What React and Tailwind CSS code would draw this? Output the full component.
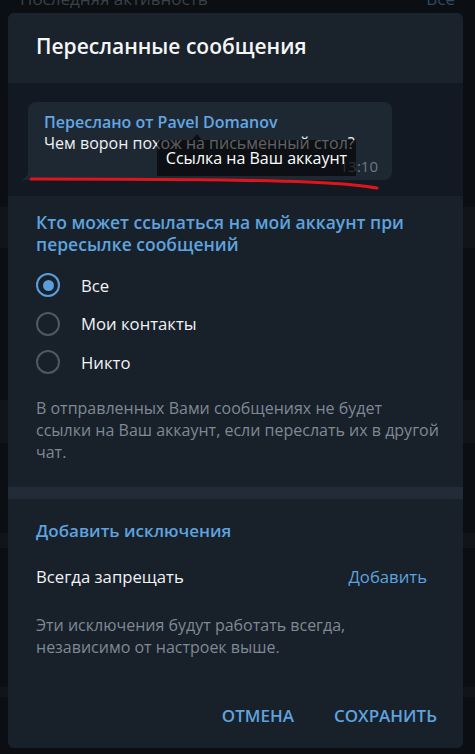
import React, { useState } from "react";

const options = ["Все", "Мои контакты", "Никто"];

const Radio = ({ checked, label, onClick }) => (
  <button
    type="button"
    onClick={onClick}
    className="flex items-center h-[38.5px] w-full text-left"
  >
    <span
      className={
        checked
          ? "w-[24px] h-[24px] rounded-full border-[2px] border-[#5a9fdc] flex items-center justify-center"
          : "w-[24px] h-[24px] rounded-full border-[2px] border-[#4f5863]"
      }
    >
      {checked && <span className="w-[11px] h-[11px] rounded-full bg-[#5a9fdc]" />}
    </span>
    <span className="ml-[21px] text-[16.7px] text-[#f1f3f5]">{label}</span>
  </button>
);

const App = () => {
  const [who, setWho] = useState(0);

  return (
    <div className="relative h-[754px] overflow-hidden bg-[#0b0f13] font-['Open_Sans',sans-serif]">
      {/* dimmed page under the box */}
      <div className="flex flex-col">
        <div className="flex justify-between px-[20px] -mt-[14px] h-[20px] text-[17px] text-[#3a4148]">
          <span>Последняя активность</span>
          <span className="text-[#2c4a66]">Все</span>
        </div>
        <div className="h-[201px]" />
        <div className="h-[41px] bg-[#111519]" />
        <div className="h-[152px]" />
        <div className="h-[43px] bg-[#111519]" />
        <div className="h-[90px]" />
        <div className="h-[15px] bg-[#111519]" />
        <div className="h-[139px]" />
        <div className="h-[10px] bg-[#111519]" />
      </div>

      {/* box */}
      <div className="absolute left-[8px] top-[13px] w-[455px] h-[735px] rounded-[6px] overflow-hidden bg-[#18202a] flex flex-col">
        <div className="h-[70px] shrink-0 bg-[#1a222c] flex items-center px-[28px]">
          <h2 className="text-[21px] font-semibold text-[#f4f6f8] -mt-[2px]">
            Пересланные сообщения
          </h2>
        </div>

        <div className="relative h-[113px] shrink-0 bg-[#121922] pt-[19px] pl-[20px]">
          <div className="relative w-[364px] h-[78px] rounded-[8px] bg-[#1e2833] px-[16px] pt-[10px]">
            <div className="text-[16px] font-semibold text-[#63a7e3] leading-[21px]">
              Переслано от Pavel Domanov
            </div>
            <div className="text-[16px] text-[#eef1f4] leading-[21px]">
              Чем ворон похож на письменный стол?
            </div>
            <div className="absolute right-[14px] bottom-[3px] text-[15px] text-[#6c7987]">
              13:10
            </div>
            <svg className="absolute -left-[7px] bottom-0" width="8" height="10" viewBox="0 0 8 10">
              <path d="M8 0 V10 H0 C4 9 7 6 8 0 Z" fill="#1e2833" />
            </svg>
            {/* tooltip */}
            <div className="absolute left-[129px] top-[38px] w-[199px] h-[36px] bg-black/60 flex items-center justify-center text-[16px] text-white">
              Ссылка на Ваш аккаунт
            </div>
            <svg className="absolute left-[164px] top-[31px]" width="10" height="7" viewBox="0 0 10 7">
              <path d="M0 7 L5 1 L10 7 Z" fill="#000" fillOpacity="0.6" />
            </svg>
          </div>
          <svg className="absolute left-0 top-0" width="455" height="113" viewBox="0 0 455 113">
            <path
              d="M23 96 C 140 96, 250 97, 300 99 S 360 104, 369 105"
              stroke="#e0141c"
              strokeWidth="3.2"
              fill="none"
              strokeLinecap="round"
            />
          </svg>
        </div>

        <div className="px-[28px] pt-[15px]">
          <div className="text-[17.5px] font-semibold text-[#5ea3df] leading-[22px]">
            Кто может ссылаться на мой аккаунт при пересылке сообщений
          </div>
          <div className="mt-[11px]">
            {options.map((o, i) => (
              <Radio key={o} label={o} checked={who === i} onClick={() => setWho(i)} />
            ))}
          </div>
          <p className="mt-[15px] -mr-[14px] text-[16px] leading-[22px] text-[#7f8994]">
            В отправленных Вами сообщениях не будет
            <br />
            ссылки на Ваш аккаунт, если переслать их в другой чат.
          </p>
        </div>

        <div className="mt-[24px] h-[12px] shrink-0 bg-[#222c38]" />

        <div className="px-[28px] pt-[21px]">
          <div className="text-[17px] font-semibold text-[#5ea3df] leading-[22px]">
            Добавить исключения
          </div>
          <div className="mt-[24px] flex justify-between text-[16.7px] leading-[22px]">
            <span className="text-[#f1f3f5]">Всегда запрещать</span>
            <span className="text-[#5ea3df] mr-[8px]">Добавить</span>
          </div>
          <p className="mt-[26px] text-[16px] leading-[22px] text-[#7f8994]">
            Эти исключения будут работать всегда, независимо от настроек выше.
          </p>
        </div>

        <div className="mt-auto mb-[21px] flex justify-end gap-[40px] pr-[26px]">
          <button type="button" className="text-[17px] font-semibold text-[#5ea3df] uppercase leading-[22px]">
            Отмена
          </button>
          <button type="button" className="text-[17px] font-semibold text-[#5ea3df] uppercase leading-[22px]">
            Сохранить
          </button>
        </div>
      </div>
    </div>
  );
};

export default App;
